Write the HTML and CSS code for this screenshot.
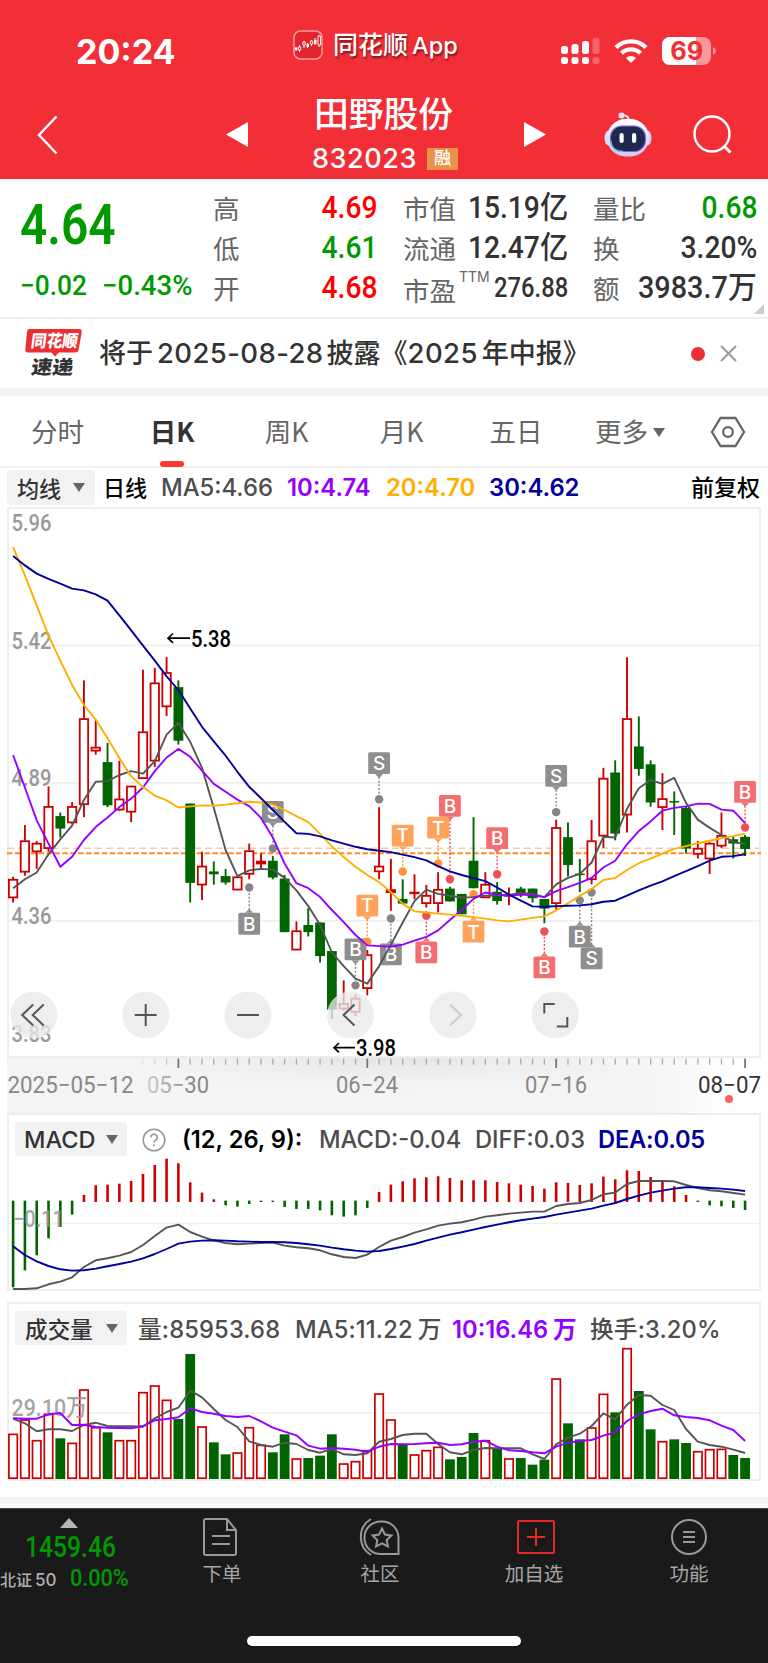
FILE: index.html
```html
<!DOCTYPE html>
<html lang="zh-CN">
<head>
<meta charset="utf-8">
<title>田野股份 832023</title>
<link rel="stylesheet" href="styles.css">
</head>
<body>
<div class="app">
  <header class="top">
    <div class="status">
      <span class="clock">20:24</span>
      <div class="brand">
        <svg width="30" height="30" viewBox="0 0 30 30"><rect x="1" y="1" width="28" height="28" rx="6.500" fill="#e3242c" stroke="#f79a9c" stroke-width="1.500"/><path d="M3 17v4M6.500 15v7M11 11v7M14.500 13v5M18.500 10v6M22 8v7M26 5v12" stroke="#fff" stroke-width="1"/><path d="M1.800 17.500h2.500v2.500H1.800zM13.500 14h2.500v3h-2.500zM21 10h2.500v4H21z" fill="#fff"/><g fill="#e3242c" stroke="#fff" stroke-width=".9"><path d="M5.300 17h2.400v3H5.300zM9.800 12h2.400v3H9.800zM17.300 11h2.400v3h-2.400zM25 6h2.500v9H25z"/></g></svg>
        <span class="brand-name">同花顺<span class="brand-app">App</span></span>
      </div>
      <div class="sys">
        <svg width="40" height="28" viewBox="0 0 40 28" fill="#fff"><rect x="0" y="9" width="7" height="8" rx="2.500"/><rect x="10.500" y="7" width="7" height="10" rx="2.500"/><rect x="21" y="4" width="7" height="13" rx="2.500"/><rect x="31.500" y="1" width="7" height="16" rx="2.500" opacity=".25"/><rect x="0" y="20" width="7" height="7" rx="2.500"/><rect x="10.500" y="20" width="7" height="7" rx="2.500"/><rect x="21" y="20" width="7" height="7" rx="2.500"/><rect x="31.500" y="20" width="7" height="7" rx="2.500" opacity=".25"/></svg>
        <svg class="wifi" width="34" height="26" viewBox="0 0 34 26"><path d="M2 9.500a21.500 21.500 0 0 1 30 0M7.500 15.300a13.500 13.500 0 0 1 19 0" fill="none" stroke="#fff" stroke-width="4.400"/><path d="M17 25l-5-5a7.500 7.500 0 0 1 10 0z" fill="#fff"/></svg>
        <svg class="batt" width="54" height="28" viewBox="0 0 54 28"><rect width="49" height="28" rx="8" fill="#f9989b"/><path d="M8 0h26v28H8a8 8 0 0 1-8-8V8a8 8 0 0 1 8-8z" fill="#fff"/><path d="M51 10q3 1.500 3 4t-3 4z" fill="#f9989b"/><text x="24.700" y="23" text-anchor="middle" class="batt-num" textLength="33" lengthAdjust="spacingAndGlyphs">69</text></svg>
      </div>
    </div>
    <nav class="title-bar">
      <svg class="back" width="21" height="40" viewBox="0 0 21 40"><path d="M19.500 1.500L2 20l17.500 18.500" fill="none" stroke="#fff" stroke-width="2.400"/></svg>
      <svg class="prev" width="22" height="25" viewBox="0 0 22 25"><path d="M22 0v25L0 12.500z" fill="#fff"/></svg>
      <div class="stock">
        <h1>田野股份</h1>
        <div class="code"><span>832023</span><em>融</em></div>
      </div>
      <svg class="next" width="22" height="25" viewBox="0 0 22 25"><path d="M0 0v25l22-12.500z" fill="#fff"/></svg>
      <svg class="robot" width="48" height="45" viewBox="0 0 48 45">
        <defs><linearGradient id="shell" x1="0" y1="0" x2="0" y2="1"><stop offset="0" stop-color="#fff"/><stop offset="1" stop-color="#ccc8f2"/></linearGradient></defs>
        <path d="M18 3.500q7-1 7 6" fill="none" stroke="#eceafa" stroke-width="2"/><circle cx="17.500" cy="3.500" r="3" fill="#e4e4f8"/>
        <ellipse cx="4.500" cy="26" rx="4" ry="7.500" fill="#d8d8f8"/><ellipse cx="43.500" cy="26" rx="4" ry="7.500" fill="#c9d0f6"/>
        <rect x="3" y="7" width="42" height="37.500" rx="18.500" fill="url(#shell)"/>
        <rect x="6.500" y="14" width="35" height="25.500" rx="11.500" fill="#1f2950" stroke="#8265d8" stroke-width="1.200"/>
        <path d="M7 29q0 10 12 10.500" fill="none" stroke="#60cdea" stroke-width="1.300"/>
        <rect x="15.500" y="21" width="4.200" height="10" rx="2.100" fill="#fff"/><rect x="28" y="21" width="4.200" height="10" rx="2.100" fill="#fff"/>
      </svg>
      <svg class="search" width="40" height="40" viewBox="0 0 40 40"><circle cx="19" cy="19" r="17.500" fill="none" stroke="#fff" stroke-width="2.400"/><path d="M31.500 31.500l6 6" stroke="#fff" stroke-width="3"/></svg>
    </nav>
  </header>

  <section class="quote">
    <div class="last">
      <div class="price"><b class="din">4.64</b></div>
      <div class="change"><span class="din">−0.02</span><span class="din pct">−0.43%</span></div>
    </div>
    <dl class="c2">
      <div><dt>高</dt><dd class="din up">4.69</dd></div>
      <div><dt>低</dt><dd class="din down">4.61</dd></div>
      <div><dt>开</dt><dd class="din up">4.68</dd></div>
    </dl>
    <dl class="c3">
      <div><dt>市值</dt><dd class="din">15.19亿</dd></div>
      <div><dt>流通</dt><dd class="din">12.47亿</dd></div>
      <div><dt class="pe">市盈<sup>TTM</sup></dt><dd class="din small">276.88</dd></div>
    </dl>
    <dl class="c4">
      <div><dt>量比</dt><dd class="din down">0.68</dd></div>
      <div><dt>换</dt><dd class="din">3.20%</dd></div>
      <div><dt>额</dt><dd class="din wide">3983.7万</dd></div>
    </dl>
    <i class="corner"></i>
  </section>

  <section class="notice">
    <svg class="logo" width="60" height="50" viewBox="0 0 60 50"><path d="M5 2h50q3 0 2.700 3l-3 17.500q-.5 3-3.500 3H35l-4 4-3.500-4H4q-3 0-2.700-3L3 5q.3-3 2-3z" fill="#ea2e32"/><text class="logo-a" x="6" y="19.500" textLength="47" lengthAdjust="spacingAndGlyphs" transform="skewX(-8) translate(3 0)">同花顺</text><text class="logo-b" x="8" y="47" textLength="42" lengthAdjust="spacingAndGlyphs" transform="skewX(-8) translate(5 0)">速递</text></svg>
    <p>将于<span class="date-num">2025-08-28</span>披露《<span>2025</span>年中报》</p>
    <i class="dot"></i>
    <svg class="close" width="17" height="17" viewBox="0 0 17 17"><path d="M1 1l15 15M16 1L1 16" stroke="#999" stroke-width="2"/></svg>
  </section>

  <nav class="tabs">
    <a>分时</a><a class="on">日K</a><a>周K</a><a>月K</a><a>五日</a><a class="more">更多<i class="caret"></i></a>
    <svg width="34" height="30" viewBox="0 0 34 30" fill="none" stroke="#666" stroke-width="2.300"><path d="M9.500 1h15L33 15l-8.500 14h-15L1 15z"/><circle cx="17" cy="15" r="4.800"/></svg>
  </nav>

  <div class="ma-row">
    <span class="pick">均线<i class="caret"></i></span>
    <span class="m-name">日线</span><span class="m5">MA5:4.66</span><span class="m10">10:4.74</span><span class="m20">20:4.70</span><span class="m30">30:4.62</span><span class="adj">前复权</span>
  </div>

  <div class="box box-k"><svg id="kline" width="750" height="547" viewBox="9 509 750 547"></svg></div>
  <div class="ruler"><svg id="ruler" width="754" height="55" viewBox="7 1058 754 55"></svg></div>

  <div class="box box-macd">
    <div class="head">
      <span class="pick">MACD<i class="caret"></i></span>
      <svg class="help" width="24" height="24" viewBox="0 0 24 24" fill="none" stroke="#999" stroke-width="1.600"><circle cx="12" cy="12" r="10.800"/><path d="M8.800 9.300a3.200 3.200 0 1 1 4.700 2.900q-1.500.8-1.500 2.300M12 16.300v2"/></svg>
      <span class="args">(12, 26, 9):</span><span class="m5">MACD:-0.04</span><span class="m5">DIFF:0.03</span><span class="m30">DEA:0.05</span>
    </div>
    <svg id="macd" width="750" height="132" viewBox="9 1157 750 132"></svg>
  </div>

  <div class="box box-vol">
    <div class="head">
      <span class="pick">成交量<i class="caret"></i></span>
      <span class="m5">量:85953.68</span><span class="m5">MA5:11.22<u>万</u></span><span class="m10">10:16.46<u>万</u></span><span class="m5">换手:3.20%</span>
    </div>
    <svg id="vol" width="750" height="132" viewBox="9 1347 750 132"></svg>
  </div>
  <div class="strip"></div>

  <footer>
    <div class="index">
      <i class="tri"></i>
      <span class="din idx">1459.46</span>
      <div class="idx-row"><span class="idx-name">北证<span>50</span></span><span class="din idx-pct">0.00%</span></div>
    </div>
    <a class="f1"><svg width="36" height="38" viewBox="0 0 36 38" fill="none" stroke="#999" stroke-width="2"><path d="M3 1h21l9 11v23q0 2-2 2H3q-2 0-2-2V3q0-2 2-2zM24 1v11h9M9 18h18M9 26h18"/></svg>下单</a>
    <a class="f2"><svg width="42" height="38" viewBox="0 0 42 38" fill="none" stroke="#999" stroke-width="2"><path d="M13 1a21 21 0 0 0 0 36M24 3.500a16.300 16.300 0 1 0 0 32.500h16.500V19.500A16.300 16.300 0 0 0 24 3.500z"/><path d="M24 10.500l2.900 6 6.500.9-4.700 4.600 1.200 6.500-5.900-3.100-5.900 3.100 1.200-6.500-4.700-4.600 6.500-.9z"/></svg>社区</a>
    <a class="f3"><svg width="38" height="38" viewBox="0 0 38 38" fill="none" stroke="#e5282c" stroke-width="2"><rect x="1" y="3" width="36" height="32" rx="1.500"/><path d="M19 10v18M10 19h18"/></svg>加自选</a>
    <a class="f4"><svg width="38" height="38" viewBox="0 0 38 38" fill="none" stroke="#999" stroke-width="2"><circle cx="19" cy="19" r="17"/><path d="M13 14h12M13 19h12M13 24h12"/></svg>功能</a>
    <i class="home"></i>
  </footer>
</div>
<script src="chart.js"></script>
</body>
</html>
```
FILE: styles.css
```css
* { box-sizing: border-box; }
body { margin: 0; width: 768px; background: #fff; font-family: Inter, "Noto Sans CJK SC", sans-serif; color: #333; }
svg { display: block; flex: none; overflow: visible; }
h1, p, dl, dd, dt { margin: 0; }
i, em { font-style: normal; flex: none; }
u { text-decoration: none; margin-left: 5px; }
.app { width: 768px; height: 1663px; overflow: hidden; }
.din { font-family: Roboto, "Noto Sans CJK SC", sans-serif; font-weight: 500; display: inline-block; white-space: nowrap; }
.up { color: #f00; }
.down { color: #090; }

.top { height: 179px; background: #f22f37; color: #fff; }
.status { height: 96px; display: flex; align-items: center; padding-top: 6px; }
.clock { width: 120px; margin-left: 76px; font-size: 34px; font-weight: 700; }
.brand { display: flex; align-items: center; margin: -12px 0 0 97px; gap: 10px; width: 268px; }
.brand-name { font: 500 25px/34px "Noto Sans CJK SC", sans-serif; text-shadow: 1px 2px 2px #7a1519; white-space: nowrap; margin-top: -2px; }
.brand-app { font-family: Inter, sans-serif; margin-left: 4px; font-size: 23.500px; }
.sys { display: flex; align-items: center; margin-top: -1px; }
.wifi { margin-left: 13px; }
.batt { margin-left: 14px; }
.batt-num { font: 700 25px Inter, sans-serif; fill: #f22f37; }
.title-bar { height: 83px; display: flex; }
.back { margin: 19px 0 0 37px; }
.prev { margin: 26px 0 0 168px; }
.stock { width: 276px; text-align: center; padding-right: 5px; }
.stock h1 { font: 500 34.8px/36px "Noto Sans CJK SC", sans-serif; margin-top: -2px; }
.code { display: flex; justify-content: center; align-items: center; font-size: 27px; font-weight: 500; line-height: 30px; margin: 14px 0 0 3px; gap: 10px; letter-spacing: .6px; }
.code em { width: 31px; height: 22px; background: #e8924a; font-size: 17px; line-height: 21px; letter-spacing: 0; }
.next { margin: 26px 0 0 0; }
.robot { margin: 16px 0 0 58px; }
.search { margin: 19px 0 0 41px; }

.quote { height: 140px; border-bottom: 2px solid #efefef; display: flex; position: relative; }
.last { width: 213px; padding-left: 20px; color: #090; }
.price { height: 79px; }
.price b { font-size: 55px; line-height: 92px; transform: scaleX(.87); transform-origin: 0 0; font-weight: 600; }
.change { display: flex; line-height: 56px; font-size: 28px; }
.change .din { transform: scaleX(.94); transform-origin: 0 0; font-weight: 500; width: 82px; }
.change .pct { transform: scaleX(.985); }
.quote dl { display: flex; flex-direction: column; padding-top: 9px; }
.quote dl div { height: 40px; display: flex; justify-content: space-between; line-height: 40px; }
.quote dt { font: 26.500px/40px "Noto Sans CJK SC", sans-serif; color: #666; white-space: nowrap; }
.quote dd { font-size: 31px; transform: scaleX(.91); transform-origin: 100% 0; }
.quote dd.wide { transform: scaleX(.93); }
.quote dd.small { font-size: 27px; transform: scaleX(.88); }
.c2 { width: 164px; }
.c3 { width: 165px; margin-left: 26px; }
.c4 { width: 164px; margin-left: 25px; }
.quote dt.pe { line-height: 43px; width: 83px; position: relative; }
.pe sup { position: absolute; left: 56px; top: 2px; font: 14px/14px Inter, sans-serif; }
.corner { position: absolute; right: 4px; bottom: 3px; border-left: 10px solid transparent; border-bottom: 10px solid #ccc; }

.notice { height: 77px; border-bottom: 8px solid #f4f4f4; display: flex; align-items: center; padding: 0 0 0 24px; }
.logo { margin-top: -3px; }
.logo-a { font: 900 17px "Noto Sans CJK SC", sans-serif; fill: #fff; }
.logo-b { font: 900 19px "Noto Sans CJK SC", sans-serif; fill: #333; }
.notice p { width: 606px; margin: -3px 0 0 15px; font: 500 27px/40px "Noto Sans CJK SC", sans-serif; white-space: nowrap; color: #333; }
.notice p span { font: 500 27.500px Inter, sans-serif; margin: 0 4px 0 0; letter-spacing: .4px; }
.notice p .date-num { margin: 0 3px 0 4px; }
.dot { width: 14px; height: 14px; border-radius: 50%; background: #ea2e32; margin-left: -14px; }
.close { margin-left: 15px; }

.tabs { height: 72px; border-bottom: 2px solid #f2f2f2; display: grid; grid-template-columns: 115px 114px 115px 115px 114px 114px 76px; align-items: center; justify-items: center; font: 26.500px/72px "Noto Sans CJK SC", sans-serif; color: #666; width: 768px; padding-right: 5px; }
.tabs a { position: relative; white-space: nowrap; top: -1px; }
.tabs .on { color: #333; font-weight: 700; }
.tabs .on::after { content: ""; position: absolute; left: 50%; margin-left: -12px; bottom: 0; width: 24px; height: 6px; border-radius: 3px; background: #fd382c; }
.caret { display: inline-block; border: 6px solid transparent; border-top: 9px solid #666; border-bottom: 0; }
.more .caret { margin: 0 0 5px 5px; }
.tabs svg { margin-left: 5px; }

.ma-row { height: 39px; position: relative; display: flex; align-items: center; padding: 0 8px 0 7px; font-size: 23.800px; font-weight: 500; white-space: nowrap; color: #000; }
.pick { display: flex; align-items: center; justify-content: space-between; background: #f2f2f2; border-radius: 4px; font-weight: 500; color: #333; }
.ma-row .pick { width: 88px; height: 35px; padding: 0 10px 1px; font-size: 22px; }
.m-name { margin: -3px 0 0 8px; width: 58px; font-size: 22px; }
.m5 { color: #4d4d4d; }
.m10 { color: #9500ff; }
.m20 { color: #ffae00; }
.m30 { color: #00009b; }
.ma-row .m5 { width: 126px; }
.ma-row .m10 { width: 99px; font-weight: 600; }
.ma-row .m20 { width: 103px; font-weight: 600; }
.ma-row .m30 { font-weight: 600; }
.adj { margin: -3px 0 0 auto; font-size: 23px; }

.box { margin: 0 7px; border: 2px solid #ededed; }
.box-k { height: 551px; }
.ruler { margin: 0 7px; height: 55px; background: linear-gradient(90deg, #f4f4f4 84%, #fff 97%); }
.box-macd { height: 178px; }
.box-vol { height: 179px; margin-top: 11px; }
.head { height: 42px; display: flex; align-items: center; font-size: 23.700px; font-weight: 500; white-space: nowrap; padding-left: 6px; }
.box-vol .head { height: 43px; letter-spacing: .15px; }
.head .pick { width: 112px; height: 34px; padding: 0 9px; margin-top: 6px; font-size: 23.500px; }
.head > span { flex: none; margin-top: 7px; }
.box-vol .head > span { margin-top: 5px; }
.box-vol .pick { padding: 0 9px 0 10px; font-size: 22.500px; }
.help { margin: 7px 16px 0 15px; }
.args { color: #000; width: 137px; font-weight: 600; }
.head .m30 { font-weight: 600; letter-spacing: -.2px; }
.box-macd .m5 { width: 156px; }
.box-macd .m5 + .m5 { width: 123px; }
.box-vol .m5 { margin-left: 11px; width: 146px; }
.box-vol .m10 { width: 138px; font-weight: 600; letter-spacing: 0; }
.box-vol .m5 + .m5 { width: 157px; }
.box-vol .m10 + .m5 { margin-left: 0; }
.strip { height: 7px; background: #f4f4f4; margin: 16px 0 4px; }

.label { font: 500 23.500px Roboto, "Noto Sans CJK SC", sans-serif; fill: #999; }
.note { font: 500 23px Roboto, sans-serif; fill: #000; }
.mark { font: 500 19px Inter, sans-serif; fill: #fff; }
.date { font: 400 23.500px Roboto, sans-serif; }

footer { height: 155px; background: #1a1a1a; position: relative; display: flex; border-top: 1px solid #444; }
.index { width: 150px; display: flex; flex-direction: column; align-items: flex-start; }
.tri { margin: 9px 0 0 60px; border: 9px solid transparent; border-bottom: 10px solid #b5b5b5; border-top: 0; }
.idx { color: #090; font-size: 29px; line-height: 38px; margin-left: 25px; transform: scaleX(.85); transform-origin: 0 0; }
.idx-row { display: flex; align-items: center; height: 26px; margin-top: -1px; }
.idx-name { font-size: 16px; width: 70px; color: #b0b0b0; white-space: nowrap; padding-top: 2px; font-weight: 500; }
.idx-name span { font-size: 17px; margin-left: 3px; }
.idx-pct { color: #090; font-size: 23.500px; transform: scaleX(.92); transform-origin: 0 0; }
footer a { position: absolute; top: 9px; width: 80px; display: flex; flex-direction: column; align-items: center; font: 19.500px/28px "Noto Sans CJK SC", sans-serif; color: #a5a5a5; gap: 3px; }
.f1 { left: 182px; }
.f2 { left: 340px; }
.f3 { left: 494px; }
.f4 { left: 649px; }
.f1 svg { margin-right: 3px; }
.f2 svg { margin-right: 2px; }
.f3 svg { margin-left: 3px; }
.home { position: absolute; left: 247px; top: 127px; width: 274px; height: 10px; border-radius: 5px; background: #fff; }
```
FILE: chart.js
```js
const RED = '#cc0000', GREEN = '#006400';
const X = i => 13.1 + i * 11.806;

/* Each row: colour, high, body top, body bottom, low */
const candles = `r 1055 1062 1113 1127|r 910 954 1041 1052|r 955 961 984 1033|r 802 858 975 985|g 875 885 920 945|r 846 858 903 908|r 505 612 852 888|r 615 692 702 713|g 680 734 855 860|r 730 837 867 870|r 800 801 873 902|r 475 649 779 779|r 470 512 730 748|r 440 483 578 605|g 505 524 674 685|g 850 850 1072 1127|r 985 1025 1077 1120|g 1012 1040 1048 1077|g 1033 1053 1071 1077|r 1055 1055 1091 1091|r 962 982 1047 1062|r 990 1011 1018 1032|g 997 1010 1057 1062|g 1050 1060 1210 1210|r 1180 1206 1259 1259|g 1143 1190 1210 1222|g 1183 1183 1277 1295|g 1263 1263 1427 1453|r 1345 1410 1424 1430|r 1383 1395 1433 1445|r 1260 1273 1367 1387|r 860 1025 1040 1062|r 1005 1091 1098 1150|g 1062 1117 1130 1130|r 1048 1098 1100 1118|r 1078 1107 1129 1141|r 1042 1090 1129 1155|g 1083 1088 1124 1124|g 1103 1103 1160 1160|g 888 1010 1087 1087|r 1042 1076 1113 1113|g 1070 1097 1123 1133|r 1085 1105 1108 1135|g 1083 1088 1105 1112|g 1088 1088 1115 1127|g 1117 1117 1144 1185|r 895 917 1129 1147|g 903 944 1022 1054|g 1005 1046 1050 1098|r 896 954 1062 1076|r 750 779 940 974|g 729 763 934 953|r 440 612 881 931|g 606 690 753 772|g 729 740 847 859|r 765 836 860 924|g 816 843 847 938|g 858 862 976 990|r 955 975 991 1004|r 958 961 1004 1047|r 875 939 968 975|g 942 950 962 1004|g 938 943 977 997`.split('|').map(r => r.split(' '));

const nums = s => s.split(' ').map(Number);
const ma5 = nums('1087 1062 1043 992 950 912 840 789 787 770 759 766 731 657 624 677 750 862 980 1053 1037 1033 1035 1058 1093 1137 1190 1267 1305 1340 1354 1305 1245 1183 1123 1091 1103 1108 1113 1112 1108 1107 1106 1100 1103 1112 1076 1058 1047 1015 943 945 865 807 784 795 778 848 895 918 938 958 963');
const ma10 = nums('714 805 897 962 1027 999 952 916 889 860 836 805 759 721 697 719 758 795 817 839 857 890 945 1018 1073 1087 1112 1148 1182 1218 1247 1249 1251 1245 1234 1223 1205 1176 1148 1117 1099 1105 1108 1105 1107 1112 1095 1084 1072 1058 1029 1010 964 927 900 870 862 858 850 851 867 870 905');
const ma20 = nums('132 211 295 380 450 518 574 615 667 722 774 804 828 841 861 858 855 856 853 849 845 847 853 868 885 902 935 970 1000 1027 1050 1070 1098 1130 1152 1155 1158 1161 1164 1168 1172 1177 1180 1175 1170 1166 1149 1129 1108 1089 1064 1058 1036 1017 1004 990 977 969 961 954 947 941 934');
const ma30 = nums('157 183 206 221 234 248 253 264 282 323 365 408 450 494 532 584 635 676 716 761 803 835 868 901 933 935 942 953 962 971 978 982 986 993 1000 1009 1025 1040 1050 1059 1067 1085 1105 1122 1138 1139 1137 1136 1135 1132 1125 1122 1108 1093 1080 1068 1053 1039 1025 1010 999 997 992');

const PY = v => 500 + v / 2.8;
const poly = (vals, y, c) => `<polyline fill="none" stroke="${c}" stroke-width="1.9" stroke-linejoin="round" points="${vals.map((v, i) => X(i).toFixed(1) + ',' + y(v).toFixed(1)).join(' ')}"/>`;
const line = (x1, y1, x2, y2, c, w, extra = '') => `<line x1="${x1}" y1="${y1}" x2="${x2}" y2="${y2}" stroke="${c}" stroke-width="${w}" ${extra}/>`;

function drawCandles() {
  return candles.map(([k, ...v], i) => {
    const [h, t, b, l] = v.map(n => PY(+n)), x = X(i);
    if (k === 'g') return line(x, h, x, l, GREEN, 1.9) + `<rect x="${x - 4.9}" y="${t}" width="9.8" height="${Math.max(b - t, 1.5)}" fill="${GREEN}"/>`;
    const hollow = b - t > 3;
    return line(x, h, x, t, RED, 1.9) + line(x, b, x, l, RED, 1.9) +
      `<rect x="${x - 4.2}" y="${t + .5}" width="8.4" height="${Math.max(b - t - .6, .6)}" fill="${hollow ? '#fff' : RED}" stroke="${RED}" stroke-width="1.8"/>`;
  }).join('');
}

/* Trade markers: candle index, letter, colour, box top, dot position */
const marks = [
  [20, 'B', 'k', 1156, 1085], [22, 'S', 'k', 843, 976], [29, 'B', 'k', 1228, 1359], [30, 'T', 'o', 1105, 1237],
  [31, 'S', 'k', 706, 838], [32, 'B', 'k', 1242, 1172], [33, 'T', 'o', 909, 1040], [35, 'B', 'r', 1236, 1164],
  [37, 'B', 'r', 826, 1062], [36, 'T', 'o', 887, 1018], [39, 'T', 'o', 1178, 1104], [41, 'B', 'r', 916, 1048],
  [45, 'B', 'r', 1278, 1208], [46, 'S', 'k', 742, 874], [48, 'B', 'k', 1192, 1121], [49, 'S', 'k', 1253, 1099], [62, 'B', 'r', 787, 917]];
const tone = { k: ['#8e8e8e', '#858585'], o: ['#ffa35c', '#ff9238'], r: ['#f26e6f', '#ef5053'] };

function drawMarks() {
  return marks.map(([i, ch, c, top, dot]) => {
    const x = X(i), y = PY(top), d = PY(dot), down = d > y, e = down ? y + 21.8 : y, s = down ? 1 : -1;
    const [fill, ink] = tone[c];
    return line(x, e + 3 * s, x, d - 5 * s, ink, 1.4, 'stroke-dasharray="2 1.7"') +
      `<rect x="${x - 10.9}" y="${y}" width="21.8" height="21.8" rx="1.5" fill="${fill}"/><path d="M${x - 4} ${e}h8l-4 ${4 * s}z" fill="${fill}"/>` +
      `<circle cx="${x}" cy="${d}" r="4.2" fill="${ink}"/><text class="mark" x="${x}" y="${y + 17.8}" text-anchor="middle">${ch}</text>`;
  }).join('');
}

function button(cx, icon, faint) {
  return `<g transform="translate(${cx} 1015)"><circle r="23.5" fill="#e9e9e9" fill-opacity=".78"/><path d="${icon}" fill="none" stroke="${faint ? '#ccc' : '#555'}" stroke-width="2"/></g>`;
}

document.getElementById('kline').innerHTML =
  [645.4, 782.9, 920.7].map(y => line(9, y, 759, y, '#efefef', 1.6)).join('') +
  [['5.96', 531], ['5.42', 648.5], ['4.89', 786.3], ['4.36', 924.4], ['3.83', 1042.2]].map(([t, y]) => `<text class="label" x="11.5" y="${y}" textLength="40" lengthAdjust="spacingAndGlyphs">${t}</text>`).join('') +
  line(7, 848.3, 759, 848.3, '#edcfad', 1.6, 'stroke-dasharray="7 4"') + line(7, 853.2, 761, 853.2, '#ff8c26', 2, 'stroke-dasharray="5.5 2.4"') +
  drawCandles() + drawMarks() +
  poly(ma5, PY, '#555') + poly(ma10, PY, '#9500ff') + poly(ma20, PY, '#ffae00') + poly(ma30, PY, '#00009b') +
  '<path d="M190 638.2h-22M173 633.5l-5 4.7 5 4.7M355 1047.7h-21M339 1043l-5 4.7 5 4.7" fill="none" stroke="#000" stroke-width="1.7"/>' +
  '<text class="note" x="191" y="646.5" textLength="40" lengthAdjust="spacingAndGlyphs">5.38</text><text class="note" x="356" y="1055.8" textLength="40" lengthAdjust="spacingAndGlyphs">3.98</text>' +
  button(33.7, 'M-.5-10.5l-11 10.5l11 10.5M10-10.5l-11 10.5l11 10.5') + button(145.7, 'M-11 0h22M0-11v22') +
  button(248, 'M-11 0h22') + button(350.5, 'M4-10.5l-11 10.5l11 10.5') +
  button(453, 'M-3-10.5l11 10.5l-11 10.5', true) + button(555.3, 'M-11-1.5v-9.5h10.5M12 2v9.5h-10.5');

document.getElementById('ruler').innerHTML =
  '<defs><radialGradient id="glow" cx=".5" cy="0" r=".7"><stop offset="0" stop-color="#ddd" stop-opacity=".7"/><stop offset="1" stop-color="#eee" stop-opacity="0"/></radialGradient></defs><rect x="170" y="1058" width="440" height="50" fill="url(#glow)"/>' +
  candles.map((_, i) => {
    if (i < 11) return '';
    const big = i % 16 === 14;
    return line(X(i), 1058.5, X(i), big ? 1068 : 1064.7, big ? '#777' : '#aaa', big ? 1.8 : 1.3, `opacity="${i < 14 ? (i - 10) / 5 : 1}"`);
  }).join('') +
  '<linearGradient id="fade"><stop offset="0" stop-color="#ccc"/><stop offset=".7" stop-color="#888"/></linearGradient>' +
  [['2025−05−12', 7.5, 126, '#888'], ['05−30', 147, 62, 'url(#fade)'], ['06−24', 336, 62, '#888'], ['07−16', 525, 62, '#888'], ['08−07', 698, 63, '#333']].map(([t, x, w, c]) => `<text class="date" x="${x}" y="1093" textLength="${w}" lengthAdjust="spacingAndGlyphs" fill="${c}">${t}</text>`).join('') +
  '<circle cx="729" cy="1099" r="4" fill="#f56262"/>';

const hist = nums('711 660 615 564 530 493 434 405 403 400 392 371 344 325 339 396 427 447 465 469 461 455 455 470 476 476 480 495 499 495 473 425 403 393 384 381 378 383 390 390 390 395 399 403 407 415 396 398 404 399 379 387 360 362 380 395 408 434 455 465 468 473 479');
const diff = nums('716 716 714 702 694 681 650 630 624 616 605 584 557 532 523 545 559 570 578 582 580 578 577 586 591 594 600 612 620 623 613 590 571 560 547 537 526 520 516 508 499 495 490 487 484 484 467 461 458 449 432 427 401 392 392 392 393 404 413 420 423 428 433');
const dea = nums('588 614 633 647 657 661 660 655 648 641 634 624 611 596 580 574 571 570 571 573 574 575 575 576 578 582 586 592 597 601 604 602 596 589 581 571 562 553 546 538 530 523 516 510 505 500 493 487 481 475 466 458 446 436 427 421 415 411 411 413 415 418 422');
const MY = v => 1050.3 + v / 3;
document.getElementById('macd').innerHTML =
  line(9, 1223.5, 759, 1223.5, '#efefef', 1.6) +
  hist.map((v, i) => line(X(i), MY(v > 452 ? 451 : 455), X(i), MY(v), v > 452 ? GREEN : RED, 2.6)).join('') +
  '<text class="label" x="13" y="1227" textLength="51" lengthAdjust="spacingAndGlyphs" fill-opacity=".9">−0.11</text>' +
  poly(diff, MY, '#555') + poly(dea, MY, '#00009b');

const vols = 'r431 r388 r450 r371 g445 r458 r298 r411 g427 r450 r450 r306 r286 r329 g387 g192 r409 g457 g493 r487 r411 r464 g487 g433 r505 g504 g497 g433 r520 r513 r480 r310 r388 g465 r493 r480 r470 g508 g501 g429 r450 g477 r505 g504 g524 g509 r265 g400 g448 r412 r311 g367 r174 g303 g418 r453 g448 g459 r483 r477 r476 g495 g504'.split(' ');
const v5 = nums('386 400 424 418 418 423 405 398 408 409 409 410 385 366 353 302 322 357 390 411 454 465 470 458 462 480 488 477 493 495 490 455 447 435 431 431 462 487 493 480 474 475 475 475 493 507 463 443 431 408 370 388 344 315 317 345 360 417 455 465 470 479 489');
const v10 = nums('385 386 386 373 369 405 404 411 413 414 415 408 391 387 382 355 366 371 378 381 378 394 413 425 436 467 476 474 476 479 486 470 462 463 462 460 458 465 463 455 452 470 481 483 487 490 470 458 453 450 437 427 393 373 363 356 376 381 384 391 407 420 453');
const VY = v => 1290 + v / 3;
document.getElementById('vol').innerHTML =
  line(9, 1413, 759, 1413, '#efefef', 1.6) +
  vols.map((s, i) => {
    const y = VY(+s.slice(1)), h = 1479 - y;
    return s[0] === 'g' ? `<rect x="${X(i) - 4.9}" y="${y}" width="9.8" height="${h}" fill="${GREEN}"/>`
      : `<rect x="${X(i) - 4.2}" y="${y + .7}" width="8.4" height="${h - 1.5}" fill="#fff" stroke="${RED}" stroke-width="1.7"/>`;
  }).join('') +
  '<text class="label" x="11.5" y="1416" textLength="76" lengthAdjust="spacingAndGlyphs" fill-opacity=".9">29.10万</text>' +
  poly(v5, VY, '#555') + poly(v10, VY, '#9500ff');
```
